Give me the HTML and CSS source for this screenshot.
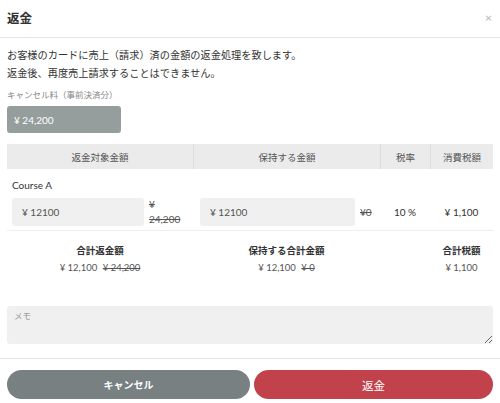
FILE: index.html
```html
<!DOCTYPE html>
<html lang="ja">
<head>
    <meta charset="UTF-8">
    <meta name="viewport" content="width=device-width, initial-scale=1.0">
    <title>返金</title>
    <link rel="stylesheet" href="styles.css">
</head>
<body>
    <div class="modal">
        <!-- header -->
        <div class="modal-header">
            <h2 class="modal-title">返金</h2>
            <span class="close">×</span>
        </div>

        <div class="modal-body">
            <p class="lead">お客様のカードに売上（請求）済の金額の返金処理を致します。<br>返金後、再度売上請求することはできません。</p>

            <div class="field-label">キャンセル料（事前決済分）</div>
            <div class="fee-box">¥ 24,200</div>

            <!-- refund table -->
            <div class="table">
                <div class="row head">
                    <div class="cell">返金対象金額</div>
                    <div class="cell">保持する金額</div>
                    <div class="cell">税率</div>
                    <div class="cell">消費税額</div>
                </div>
                <div class="item">
                    <div class="item-name">Course A</div>
                    <div class="row">
                        <div class="cell first">
                            <div class="input">¥ 12100</div>
                            <span class="old wrap">¥ 24,200</span>
                        </div>
                        <div class="cell second">
                            <div class="input wide">¥ 12100</div>
                            <span class="old">¥0</span>
                        </div>
                        <div class="cell center">10 %</div>
                        <div class="cell center">¥ 1,100</div>
                    </div>
                </div>
                <div class="row totals">
                    <div class="total">
                        <div class="total-label">合計返金額</div>
                        <div class="total-value">¥ 12,100 <span class="old">¥ 24,200</span></div>
                    </div>
                    <div class="total">
                        <div class="total-label">保持する合計金額</div>
                        <div class="total-value">¥ 12,100 <span class="old">¥ 0</span></div>
                    </div>
                    <div></div>
                    <div class="total">
                        <div class="total-label">合計税額</div>
                        <div class="total-value">¥ 1,100</div>
                    </div>
                </div>
            </div>

            <textarea class="memo" placeholder="メモ"></textarea>
        </div>

        <div class="modal-footer">
            <button class="btn cancel">キャンセル</button>
            <button class="btn refund">返金</button>
        </div>
    </div>
</body>
</html>
```

FILE: styles.css
```css
body {
    margin: 0;
    background-color: #fff;
    color: #333;
    font-family: Lato, "Noto Sans CJK JP", sans-serif;
}
.modal {
    width: 500px;
}
.modal-header {
    height: 37px;
    padding: 0 7px;
    display: flex;
    align-items: center;
    justify-content: space-between;
    border-bottom: 1px solid #e6e6e6;
}
.modal-title {
    margin: 0;
    font-size: 12.5px;
    font-weight: 700;
    line-height: 18px;
}
.close {
    color: #c4c4c4;
    font-size: 12px;
    font-weight: 700;
    margin-right: 1px;
    margin-top: -2px;
}
.modal-body {
    padding: 8px 7px 14px;
}
.lead {
    margin: 0;
    font-size: 10.2px;
    line-height: 18px;
}
.field-label {
    margin-top: 7px;
    font-size: 8.5px;
    line-height: 12px;
    color: #888;
}
.fee-box {
    margin-top: 5px;
    width: 107px;
    height: 27px;
    padding-left: 7px;
    display: flex;
    align-items: center;
    border-radius: 3px;
    background-color: #969e9d;
    color: #fff;
    font-size: 10px;
}
.table {
    margin-top: 11px;
    font-size: 9.5px;
}
.row {
    display: grid;
    grid-template-columns: 186px 187px 50px 63px;
}
.row.head {
    height: 25px;
    background-color: #ebebeb;
    color: #555;
}
.row.head .cell {
    display: flex;
    align-items: center;
    justify-content: center;
}
.row.head .cell + .cell {
    border-left: 1px solid #dcdcdc;
}
.item {
    padding: 10px 0 5px;
    border-bottom: 1px solid #eee;
}
.item-name {
    padding-left: 5px;
    line-height: 12px;
    font-size: 10px;
}
.item .row {
    margin-top: 6px;
    height: 28px;
    font-size: 10px;
}
.item .cell {
    display: flex;
    align-items: center;
}
.item .cell.center {
    justify-content: center;
}
.cell.first {
    padding-left: 5px;
}
.cell.second {
    padding-left: 7px;
}
.input {
    width: 122px;
    height: 28px;
    padding-left: 10px;
    display: flex;
    align-items: center;
    border-radius: 3px;
    background-color: #f0f0f0;
    color: #555;
}
.input.wide {
    width: 145px;
}
.old {
    color: #555;
    text-decoration: line-through;
}
.input + .old {
    margin-left: 5px;
}
.old.wrap {
    width: 36px;
    line-height: 15px;
}
.totals {
    padding-top: 12px;
}
.total {
    text-align: center;
}
.total-label {
    font-weight: 700;
    line-height: 16px;
}
.total-value {
    line-height: 18px;
    color: #555;
}
.total-value .old {
    margin-left: 3px;
}
.memo {
    display: block;
    box-sizing: border-box;
    width: 486px;
    height: 38px;
    margin-top: 29px;
    padding: 3px 7px;
    border: none;
    border-radius: 3px;
    background-color: #f0f0f0;
    font-family: inherit;
    font-size: 8.5px;
    resize: vertical;
}
.memo::placeholder {
    color: #999;
}
.modal-footer {
    padding: 11px 7px 6px;
    display: flex;
    gap: 4px;
    border-top: 1px solid #e6e6e6;
}
.btn {
    height: 29px;
    border: none;
    border-radius: 15px;
    color: #fff;
    font-family: inherit;
    font-size: 11.5px;
}
.btn.cancel {
    width: 243px;
    background-color: #788082;
    font-size: 10px;
    font-weight: 700;
}
.btn.refund {
    flex: 1;
    background-color: #c1424b;
}
```
